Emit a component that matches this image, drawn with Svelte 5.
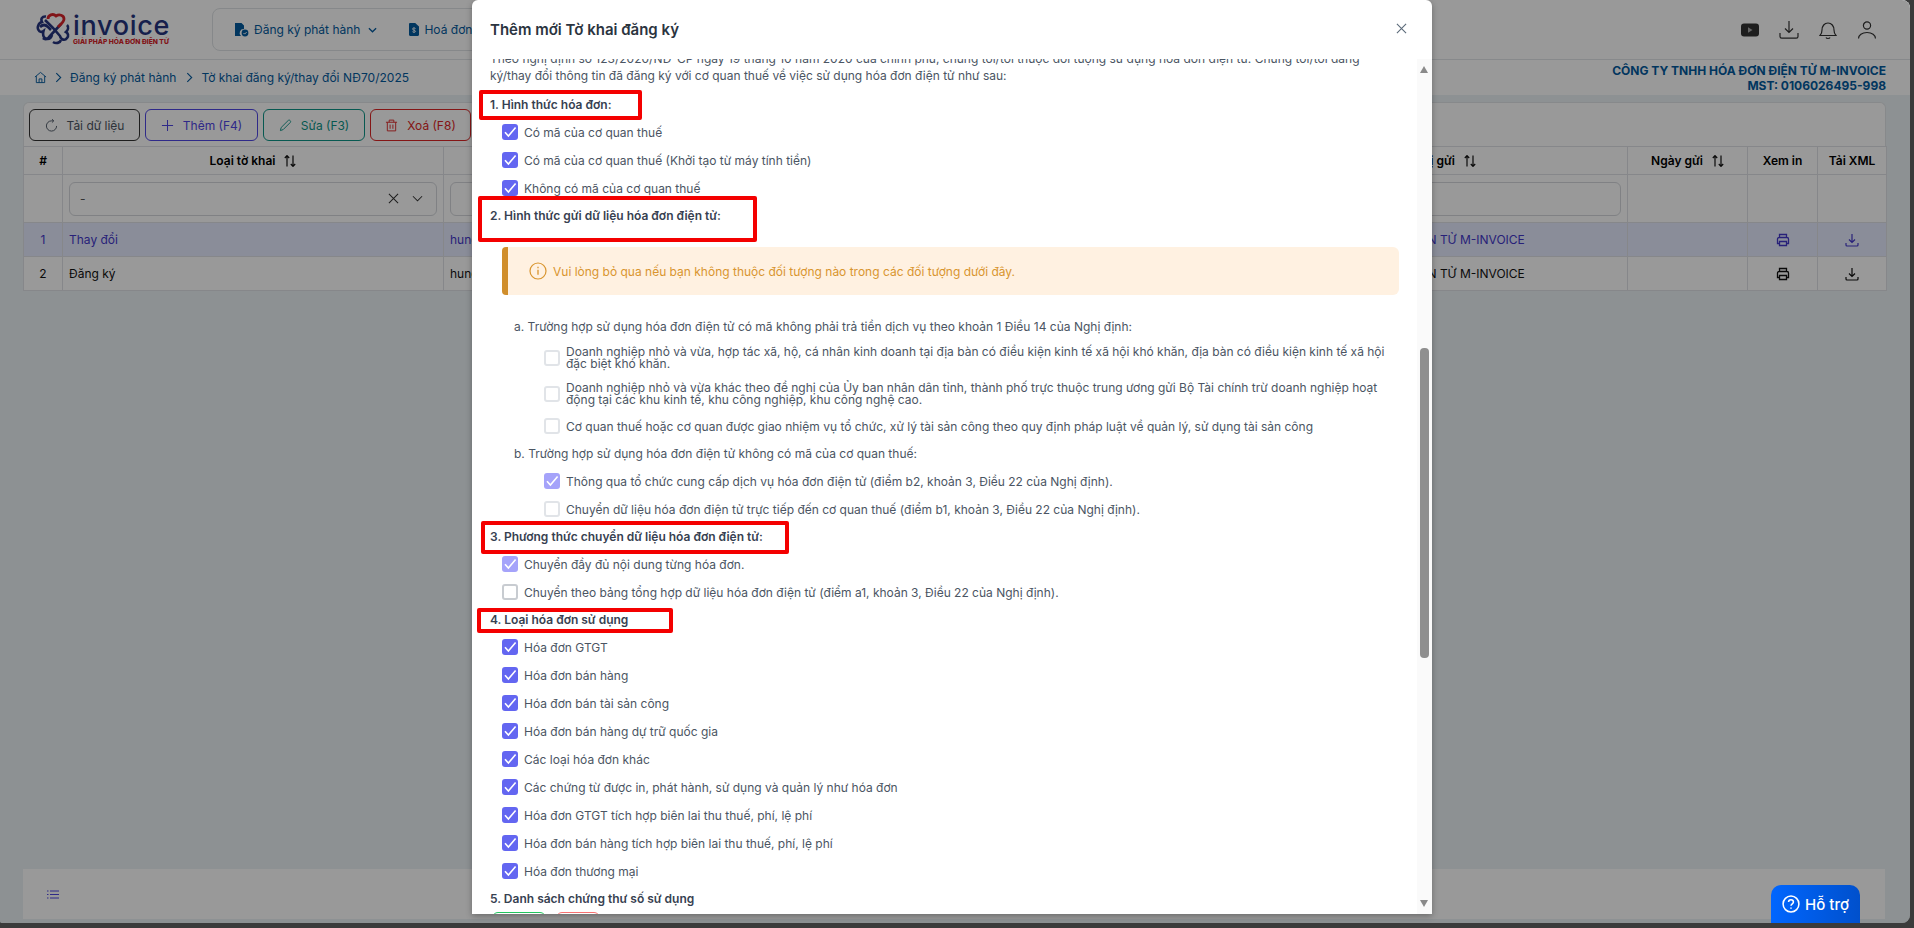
<script>
	const invoiceTypes = [
		'Hóa đơn GTGT',
		'Hóa đơn bán hàng',
		'Hóa đơn bán tài sản công',
		'Hóa đơn bán hàng dự trữ quốc gia',
		'Các loại hóa đơn khác',
		'Các chứng từ được in, phát hành, sử dụng và quản lý như hóa đơn',
		'Hóa đơn GTGT tích hợp biên lai thu thuế, phí, lệ phí',
		'Hóa đơn bán hàng tích hợp biên lai thu thuế, phí, lệ phí',
		'Hóa đơn thương mại'
	];

	const rows = [
		{ id: 1, type: 'Thay đổi', selected: true },
		{ id: 2, type: 'Đăng ký', selected: false }
	];
</script>

{#snippet box(state)}
	<span class="box {state}">
		{#if state === 'on' || state === 'soft'}
			<svg viewBox="0 0 16 16" width="16" height="16"><path d="M3 8.2l3.4 3.9L13.6 3.4" fill="none" stroke="#fff" stroke-width="1.6" /></svg>
		{/if}
	</span>
{/snippet}

{#snippet sortIcon()}
	<svg class="sort" viewBox="0 0 12 12" width="12" height="12"><path d="M3 11.500V.8M.8 3L3 .6 5.200 3M9 .5v10.700M6.800 9L9 11.400 11.200 9" fill="none" stroke="#111" stroke-width="1.200" /></svg>
{/snippet}

<div class="screen">
	<div class="win">
		<header class="topbar">
			<div class="logo">
				<svg viewBox="0 0 34 34" width="34" height="34">
					<g fill="none" stroke="#26357f" stroke-width="2.600">
						<path d="M10 4.500C6 4 4.500 7 6 10c-4 1-5 6-3.500 8 1 2 3 2.500 5 1 -1 4 0 8 4 8 3 0 4-2 4.500-4" />
						<path d="M9 8l8 8 7 8c1 4 5 5 7 2 2-2 1-5-1-6 2-2 3-5 1-7" />
						<path d="M7 26c2 2 5 1 6-1l12-13" />
						<path d="M4 15c3-3 6-2 8 0l3 3" />
						<path d="M17 30c3 2 7 1 8-2" />
					</g>
					<path d="M12 7c0-4 5-6 8-3 3-2 8-1 8 3 0 3-3 5-6 8" fill="none" stroke="#d8232a" stroke-width="2.800" />
				</svg>
				<div class="logo-text">
					<span class="logo-name">invoice</span>
					<span class="logo-sub">GIẢI PHÁP HÓA ĐƠN ĐIỆN TỬ</span>
				</div>
			</div>
			<nav class="nav">
				<span class="nav-item">
					<svg viewBox="0 0 15 15" width="15" height="15"><path d="M1 1h6.5L10 3.5V7a4 4 0 0 0-3 7H1z" fill="#035a9e" /><circle cx="11" cy="11" r="3.4" fill="#035a9e" /><path d="M9.5 11l1.1 1.1 2-2" fill="none" stroke="#fff" stroke-width="1" /></svg>
					Đăng ký phát hành
					<svg class="chev" viewBox="0 0 10 6" width="9" height="6"><path d="M1 1l4 4 4-4" fill="none" stroke="#035a9e" stroke-width="1.4" /></svg>
				</span>
				<span class="nav-item second">
					<svg viewBox="0 0 10 13" width="10" height="13"><path d="M0 1.2C0 .5.5 0 1.2 0h5L10 3.6v8.2c0 .7-.5 1.2-1.2 1.2H1.2C.5 13 0 12.5 0 11.8z" fill="#035a9e" /><path d="M3.4 8.6c.6 1 3.2.9 3.2-.3S3.4 7.300 3.400 6c0-1.200 2.400-1.300 3.200-.4M5 4.300v5.600" fill="none" stroke="#fff" stroke-width=".8" /></svg>
					Hoá đơn
				</span>
			</nav>
			<div class="top-icons">
				<svg viewBox="0 0 18 14" width="18" height="14"><rect width="18" height="13" y=".5" rx="3" fill="#333" /><path d="M7 4.300v5.400L11.500 7z" fill="#aaa" /></svg>
				<svg viewBox="0 0 20 20" width="20" height="20"><path d="M10 1v11M6 8.500l4 4 4-4M1 13v3.500c0 1 .7 1.700 1.700 1.700h14.600c1 0 1.700-.7 1.700-1.700V13" fill="none" stroke="#333" stroke-width="1.200" /></svg>
				<svg viewBox="0 0 18 20" width="18" height="20"><path d="M1 15.500c1.500-1.500 2-2.500 2-5.500 0-4 2.500-7 6-7s6 3 6 7c0 3 .5 4 2 5.500zM7 17.500c.5 1.300 3.500 1.300 4 0" fill="none" stroke="#333" stroke-width="1.200" /></svg>
				<svg viewBox="0 0 20 20" width="20" height="20"><circle cx="10" cy="5.500" r="3.600" fill="none" stroke="#333" stroke-width="1.200" /><path d="M1.500 18.500c0-3.500 3.500-6 8.500-6s8.500 2.500 8.500 6" fill="none" stroke="#333" stroke-width="1.200" /></svg>
			</div>
		</header>

		<div class="crumbs">
			<div class="crumb-path">
				<svg viewBox="0 0 14 14" width="13" height="13"><path d="M1 6.500L7 1.500l6 5M2.500 5.500v7h9v-7M5.500 12.500V8.500h3v4" fill="none" stroke="#035a9e" stroke-width="1" /></svg>
				<svg viewBox="0 0 6 10" width="7" height="11"><path d="M1 1l4 4-4 4" fill="none" stroke="#035a9e" stroke-width="1" /></svg>
				<span>Đăng ký phát hành</span>
				<svg viewBox="0 0 6 10" width="7" height="11"><path d="M1 1l4 4-4 4" fill="none" stroke="#035a9e" stroke-width="1" /></svg>
				<span>Tờ khai đăng ký/thay đổi NĐ70/2025</span>
			</div>
			<div class="company">
				<div>CÔNG TY TNHH HÓA ĐƠN ĐIỆN TỬ M-INVOICE</div>
				<div>MST: 0106026495-998</div>
			</div>
		</div>

		<main class="main">
			<div class="toolbar">
				<button class="btn gray">
					<svg viewBox="0 0 14 14" width="13" height="13"><path d="M12.500 7.500A5.500 5.500 0 1 1 7 2h2M7.500 .2L9.500 2 7.500 3.800" fill="none" stroke="currentColor" stroke-width="1" /></svg>
					Tải dữ liệu
				</button>
				<button class="btn purple">
					<svg viewBox="0 0 14 14" width="13" height="13"><path d="M7 1v12M1 7h12" fill="none" stroke="currentColor" stroke-width="1.100" /></svg>
					Thêm (F4)
				</button>
				<button class="btn teal">
					<svg viewBox="0 0 14 14" width="13" height="13"><path d="M1.500 12.500l.8-3.300L9.800 1.700c.7-.7 1.500-.7 2.200 0s.7 1.500 0 2.200l-7.500 7.500z" fill="none" stroke="currentColor" stroke-width="1" /></svg>
					Sửa (F3)
				</button>
				<button class="btn red">
					<svg viewBox="0 0 14 14" width="13" height="13"><path d="M1 3.500h12M4.500 3.500V1.200h5v2.300M2.500 3.500v9.300h9V3.500M5.500 6v4.500M8.500 6v4.500" fill="none" stroke="currentColor" stroke-width="1" /></svg>
					Xoá (F8)
				</button>
			</div>
			<table class="grid">
				<colgroup>
					<col class="c-no" /><col class="c-type" /><col class="c-user" /><col class="c-date" /><col class="c-org" /><col class="c-sent" /><col class="c-print" /><col class="c-xml" />
				</colgroup>
				<thead>
					<tr class="head">
						<th>#</th>
						<th>Loại tờ khai {@render sortIcon()}</th>
						<th>Người tạo {@render sortIcon()}</th>
						<th>Ngày tạo {@render sortIcon()}</th>
						<th>Đơn vị gửi {@render sortIcon()}</th>
						<th>Ngày gửi {@render sortIcon()}</th>
						<th>Xem in</th>
						<th>Tải XML</th>
					</tr>
					<tr class="filters">
						<th></th>
						<th>
							<div class="filter select">
								<span>-</span>
								<svg viewBox="0 0 12 12" width="11" height="11"><path d="M1 1l10 10M11 1L1 11" fill="none" stroke="#333" stroke-width="1.100" /></svg>
								<svg viewBox="0 0 12 8" width="11" height="8"><path d="M1 1l5 5 5-5" fill="none" stroke="#333" stroke-width="1.100" /></svg>
							</div>
						</th>
						<th><div class="filter"></div></th>
						<th><div class="filter"></div></th>
						<th><div class="filter"></div></th>
						<th></th>
						<th></th>
						<th></th>
					</tr>
				</thead>
				<tbody>
					{#each rows as row}
						<tr class:selected={row.selected}>
							<td class="center">{row.id}</td>
							<td>{row.type}</td>
							<td>hungpv</td>
							<td></td>
							<td>CÔNG TY TNHH HÓA ĐƠN ĐIỆN TỬ M-INVOICE</td>
							<td></td>
							<td class="center">
								<svg class="cell-icon" viewBox="0 0 14 14" width="14" height="14"><path d="M3.500 4.500V1.500h7v3M3.500 10.500H1.500v-4.500c0-.8.700-1.500 1.500-1.500h8c.8 0 1.500.7 1.500 1.500v4.500h-2M3.500 8.500h7v4h-7z" fill="none" stroke="currentColor" stroke-width="1.300" /></svg>
							</td>
							<td class="center">
								<svg class="cell-icon" viewBox="0 0 14 14" width="14" height="14"><path d="M7 1v8M4 6.500L7 9.500l3-3M1 10v2c0 .6.400 1 1 1h10c.6 0 1-.4 1-1v-2" fill="none" stroke="currentColor" stroke-width="1.200" /></svg>
							</td>
						</tr>
					{/each}
				</tbody>
			</table>
		</main>

		<footer class="footer">
			<svg viewBox="0 0 12 9" width="12" height="9"><path d="M0 1h1.500M3 1h9M0 4.500h1.500M3 4.500h9M0 8h1.500M3 8h9" fill="none" stroke="#4f46e5" stroke-width="1" /></svg>
		</footer>

		<div class="overlay">
			<div class="modal">
				<div class="modal-head">
					<h2>Thêm mới Tờ khai đăng ký</h2>
					<svg viewBox="0 0 12 12" width="11" height="11"><path d="M1 1l10 10M11 1L1 11" fill="none" stroke="#5c6b7a" stroke-width="1.200" /></svg>
				</div>
				<div class="modal-body">
					<div class="scroll">
						<div class="content">
							<p class="intro">Theo nghị định số 123/2020/NĐ-CP ngày 19 tháng 10 năm 2020 của chính phủ, chúng tôi/tôi thuộc đối tượng sử dụng hóa đơn điện tử. Chúng tôi/tôi đăng ký/thay đổi thông tin đã đăng ký với cơ quan thuế về việc sử dụng hóa đơn điện tử như sau:</p>

							<h3>1. Hình thức hóa đơn:</h3>
							<div class="row">{@render box('on')}Có mã của cơ quan thuế</div>
							<div class="row">{@render box('on')}Có mã của cơ quan thuế (Khởi tạo từ máy tính tiền)</div>
							<div class="row">{@render box('on')}Không có mã của cơ quan thuế</div>

							<h3>2. Hình thức gửi dữ liệu hóa đơn điện tử:</h3>
							<div class="alert">
								<svg viewBox="0 0 18 18" width="18" height="18"><circle cx="9" cy="9" r="8" fill="none" stroke="#d9952f" stroke-width="1.200" /><path d="M9 7.800v5M9 4.800v1.400" fill="none" stroke="#d9952f" stroke-width="1.300" /></svg>
								Vui lòng bỏ qua nếu bạn không thuộc đối tượng nào trong các đối tượng dưới đây.
							</div>

							<div class="sub">a. Trường hợp sử dụng hóa đơn điện tử có mã không phải trả tiền dịch vụ theo khoản 1 Điều 14 của Nghị định:</div>
							<div class="row deep tall">{@render box('off')}<span class="tight">Doanh nghiệp nhỏ và vừa, hợp tác xã, hộ, cá nhân kinh doanh tại địa bàn có điều kiện kinh tế xã hội khó khăn, địa bàn có điều kiện kinh tế xã hội đặc biệt khó khăn.</span></div>
							<div class="row deep tall">{@render box('off')}<span class="tight">Doanh nghiệp nhỏ và vừa khác theo đề nghị của Ủy ban nhân dân tỉnh, thành phố trực thuộc trung ương gửi Bộ Tài chính trừ doanh nghiệp hoạt động tại các khu kinh tế, khu công nghiệp, khu công nghệ cao.</span></div>
							<div class="row deep">{@render box('off')}Cơ quan thuế hoặc cơ quan được giao nhiệm vụ tổ chức, xử lý tài sản công theo quy định pháp luật về quản lý, sử dụng tài sản công</div>

							<div class="sub">b. Trường hợp sử dụng hóa đơn điện tử không có mã của cơ quan thuế:</div>
							<div class="row deep">{@render box('soft')}Thông qua tổ chức cung cấp dịch vụ hóa đơn điện tử (điểm b2, khoản 3, Điều 22 của Nghị định).</div>
							<div class="row deep">{@render box('off')}Chuyển dữ liệu hóa đơn điện tử trực tiếp đến cơ quan thuế (điểm b1, khoản 3, Điều 22 của Nghị định).</div>

							<h3>3. Phương thức chuyển dữ liệu hóa đơn điện tử:</h3>
							<div class="row">{@render box('soft')}Chuyển đầy đủ nội dung từng hóa đơn.</div>
							<div class="row">{@render box('plain')}Chuyển theo bảng tổng hợp dữ liệu hóa đơn điện tử (điểm a1, khoản 3, Điều 22 của Nghị định).</div>

							<h3>4. Loại hóa đơn sử dụng</h3>
							{#each invoiceTypes as item}
								<div class="row">{@render box('on')}{item}</div>
							{/each}

							<h3>5. Danh sách chứng thư số sử dụng</h3>
							<div class="cert-actions">
								<button class="cert green">Thêm mới</button>
								<button class="cert pink">Xoá</button>
							</div>

							<span class="mark m1"></span>
							<span class="mark m2"></span>
							<span class="mark m3"></span>
							<span class="mark m4"></span>
						</div>
					</div>
					<div class="track">
						<span class="arrow up"></span>
						<span class="thumb"></span>
						<span class="arrow down"></span>
					</div>
				</div>
			</div>
		</div>

		<button class="help">
			<svg viewBox="0 0 20 20" width="18" height="18"><circle cx="10" cy="10" r="8.800" fill="none" stroke="#fff" stroke-width="1.700" /><path d="M7.300 7.800c0-3.400 5.400-3.400 5.400 0 0 2-2.700 2-2.700 4.200M10 13.800v1.600" fill="none" stroke="#fff" stroke-width="1.700" /></svg>
			Hỗ trợ
		</button>
	</div>
</div>

<style>
	:global(body) {
		margin: 0;
		font-family: Inter, 'Noto Sans', sans-serif;
	}

	.screen {
		width: 1914px;
		height: 928px;
		background: #3b3b3b;
		overflow: hidden;
	}

	.win {
		position: relative;
		width: 1910px;
		height: 923px;
		background: #ebf2f5;
		border-radius: 0 8px 8px 2px;
		overflow: hidden;
		display: flex;
		flex-direction: column;
		font-size: 12px;
		color: #111;
	}

	.topbar {
		flex: none;
		height: 59px;
		background: #fff;
		border-bottom: 1px solid #e2e5e8;
		display: flex;
		align-items: center;
		padding: 0 33px 0 36px;
	}

	.logo {
		display: flex;
		align-items: center;
		gap: 3px;
		width: 134px;
		margin-top: -1px;
	}

	.logo-text {
		display: flex;
		flex-direction: column;
		width: 97px;
	}

	.logo-name {
		font-size: 27px;
		line-height: 25px;
		font-weight: 500;
		letter-spacing: 0.7px;
		color: #26357f;
	}

	.logo-sub {
		font-size: 6.700px;
		line-height: 8px;
		font-weight: 800;
		color: #d8232a;
		white-space: nowrap;
	}

	.nav {
		flex: none;
		width: 1000px;
		height: 43px;
		margin-left: 42px;
		border: 1px solid #dfe3e6;
		border-radius: 8px;
		box-sizing: border-box;
		display: flex;
		align-items: center;
		padding-left: 21px;
		color: #035a9e;
	}

	.nav-item {
		display: flex;
		align-items: center;
		gap: 5px;
	}

	.chev {
		margin-left: 3px;
	}

	.second {
		margin-left: 32px;
	}

	.top-icons {
		margin-left: auto;
		display: flex;
		align-items: center;
		gap: 20px;
	}

	.crumbs {
		flex: none;
		height: 35px;
		background: #fff;
		display: flex;
		align-items: center;
		justify-content: space-between;
		padding: 0 24px 0 34px;
		color: #035a9e;
	}

	.crumb-path {
		display: flex;
		align-items: center;
		gap: 8px;
	}

	.crumb-path span:first-of-type {
		margin-right: 2px;
	}

	.company {
		text-align: right;
		font-weight: 700;
		line-height: 15px;
		padding-top: 1px;
	}

	.main {
		flex: 1;
		padding: 7px 24px 0 23px;
	}

	.toolbar {
		height: 44px;
		box-sizing: border-box;
		background: #fff;
		border: 1px solid #e2e5e8;
		border-bottom: 0;
		border-radius: 6px 6px 0 0;
		padding: 6px 5px;
		display: flex;
		gap: 5px;
	}

	.btn {
		height: 32px;
		display: flex;
		align-items: center;
		justify-content: center;
		gap: 9px;
		background: #fff;
		border: 1px solid;
		border-radius: 6px;
		font: inherit;
		padding: 0;
	}

	.gray { width: 111px; color: #4b5563; border-color: #333; }
	.purple { width: 113px; color: #4f46e5; border-color: #4f46e5; }
	.teal { width: 102px; color: #0d9488; border-color: #0d9488; }
	.red { width: 101px; color: #dc2626; border-color: #dc2626; }

	.grid {
		table-layout: fixed;
		border-collapse: collapse;
		width: 1863px;
		background: #fff;
	}

	.c-no { width: 39px; }
	.c-type { width: 381px; }
	.c-user { width: 380px; }
	.c-date { width: 422px; }
	.c-org { width: 382px; }
	.c-sent { width: 120px; }
	.c-print { width: 70px; }
	.c-xml { width: 69px; }

	.grid th,
	.grid td {
		box-sizing: border-box;
		border: 1px solid #dfe2e6;
		padding: 0 6px;
		white-space: nowrap;
		overflow: hidden;
	}

	.head th {
		height: 28px;
		font-weight: 600;
		color: #000;
		text-align: center;
	}

	.sort {
		vertical-align: -2px;
		margin-left: 6px;
	}

	.filters th {
		height: 48px;
	}

	.filter {
		height: 34px;
		box-sizing: border-box;
		border: 1px solid #d5d8dc;
		border-radius: 6px;
		display: flex;
		align-items: center;
		gap: 13px;
		padding: 0 13px 0 10px;
		font-weight: 400;
		color: #555;
	}

	.filter span {
		flex: 1;
		text-align: left;
	}

	.grid td {
		height: 34px;
		color: #111;
	}

	.grid .selected td {
		background: #e6ebff;
		color: #4338ca;
	}

	.center {
		text-align: center;
	}

	.cell-icon {
		display: block;
		margin: 0 auto;
	}

	.footer {
		flex: none;
		height: 50px;
		margin: 0 25px 4px 23px;
		background: #fff;
		display: flex;
		align-items: center;
		padding-left: 24px;
	}

	.overlay {
		position: absolute;
		inset: 0;
		background: rgba(0, 0, 0, 0.4);
	}

	.modal {
		width: 960px;
		height: 914px;
		margin-left: 472px;
		background: #fff;
		border-radius: 6px 6px 0 0;
		box-shadow: 0 2px 6px rgba(0, 0, 0, 0.3);
		display: flex;
		flex-direction: column;
	}

	.modal-head {
		flex: none;
		height: 59px;
		display: flex;
		align-items: center;
		justify-content: space-between;
		padding: 0 25px 0 18px;
		box-sizing: border-box;
	}

	.modal-head svg {
		margin-bottom: 3px;
	}

	.modal-head h2 {
		margin: 0;
		font-size: 15px;
		font-weight: 600;
		color: #2b3440;
	}

	.modal-body {
		flex: 1;
		min-height: 0;
		display: flex;
	}

	.scroll {
		flex: 1;
		overflow: hidden;
	}

	.content {
		position: relative;
		margin-top: -9px;
		padding: 0 18px;
		color: #4b5563;
	}

	.intro {
		margin: 0 0 7px;
		line-height: 17px;
	}

	h3 {
		margin: 0;
		height: 27px;
		line-height: 27px;
		font-size: 12px;
		font-weight: 600;
		color: #374151;
	}

	.row {
		height: 28px;
		display: flex;
		align-items: center;
		gap: 6px;
		padding-left: 12px;
	}

	.row.deep {
		padding-left: 54px;
	}

	.row.tall {
		height: 36px;
	}

	.tight {
		line-height: 12px;
	}

	.box {
		flex: none;
		width: 16px;
		height: 16px;
		box-sizing: border-box;
		border-radius: 3px;
	}

	.box svg {
		display: block;
	}

	.box.on {
		background: #6366f1;
	}

	.box.soft {
		background: #a5a3fa;
	}

	.box.off {
		border: 2px solid #e1e4e8;
	}

	.box.plain {
		border: 2px solid #c8ccd1;
	}

	.alert {
		height: 48px;
		margin: 18px 0 18px 12px;
		box-sizing: border-box;
		border-left: 6px solid #d08e2b;
		border-radius: 4px 6px 6px 4px;
		background: #fff1e1;
		color: #d9952f;
		display: flex;
		align-items: center;
		gap: 6px;
		padding-left: 21px;
	}

	.sub {
		height: 27px;
		line-height: 27px;
		padding-left: 24px;
	}

	.cert-actions {
		display: flex;
		gap: 10px;
		padding-left: 2px;
	}

	.cert {
		height: 30px;
		border: 1px solid;
		border-radius: 6px;
		background: #fff;
		font: inherit;
	}

	.green { width: 54px; border-color: #22c55e; color: #22c55e; }
	.pink { width: 44px; border-color: #f87171; color: #f87171; }

	.mark {
		position: absolute;
		box-sizing: border-box;
		border: 4px solid #f40000;
		border-radius: 2px;
	}

	/* offsets are from the top of .content, y 50 on the page */
	.m1 { left: 7px; top: 40px; width: 163px; height: 30px; }
	.m2 { left: 6px; top: 146px; width: 279px; height: 46px; }
	.m3 { left: 9px; top: 471px; width: 308px; height: 33px; }
	.m4 { left: 5px; top: 558px; width: 196px; height: 25px; }

	.track {
		flex: none;
		position: relative;
		width: 15px;
		background: #fafafa;
	}

	.thumb {
		position: absolute;
		left: 3px;
		top: 289px;
		width: 9px;
		height: 310px;
		border-radius: 4px;
		background: #8f8f8f;
	}

	.arrow {
		position: absolute;
		left: 3px;
		border-left: 4.500px solid transparent;
		border-right: 4.500px solid transparent;
	}

	.up {
		top: 7px;
		border-bottom: 7px solid #8a8a8a;
	}

	.down {
		bottom: 7px;
		border-top: 7px solid #8a8a8a;
	}

	.help {
		position: absolute;
		right: 50px;
		bottom: 0;
		width: 89px;
		height: 38px;
		border: 0;
		border-radius: 10px 10px 0 0;
		background: linear-gradient(90deg, #0066ff, #0050cc);
		color: #fff;
		font: inherit;
		font-size: 15px;
		font-weight: 500;
		display: flex;
		align-items: center;
		justify-content: center;
		gap: 5px;
		padding: 0;
	}
</style>
